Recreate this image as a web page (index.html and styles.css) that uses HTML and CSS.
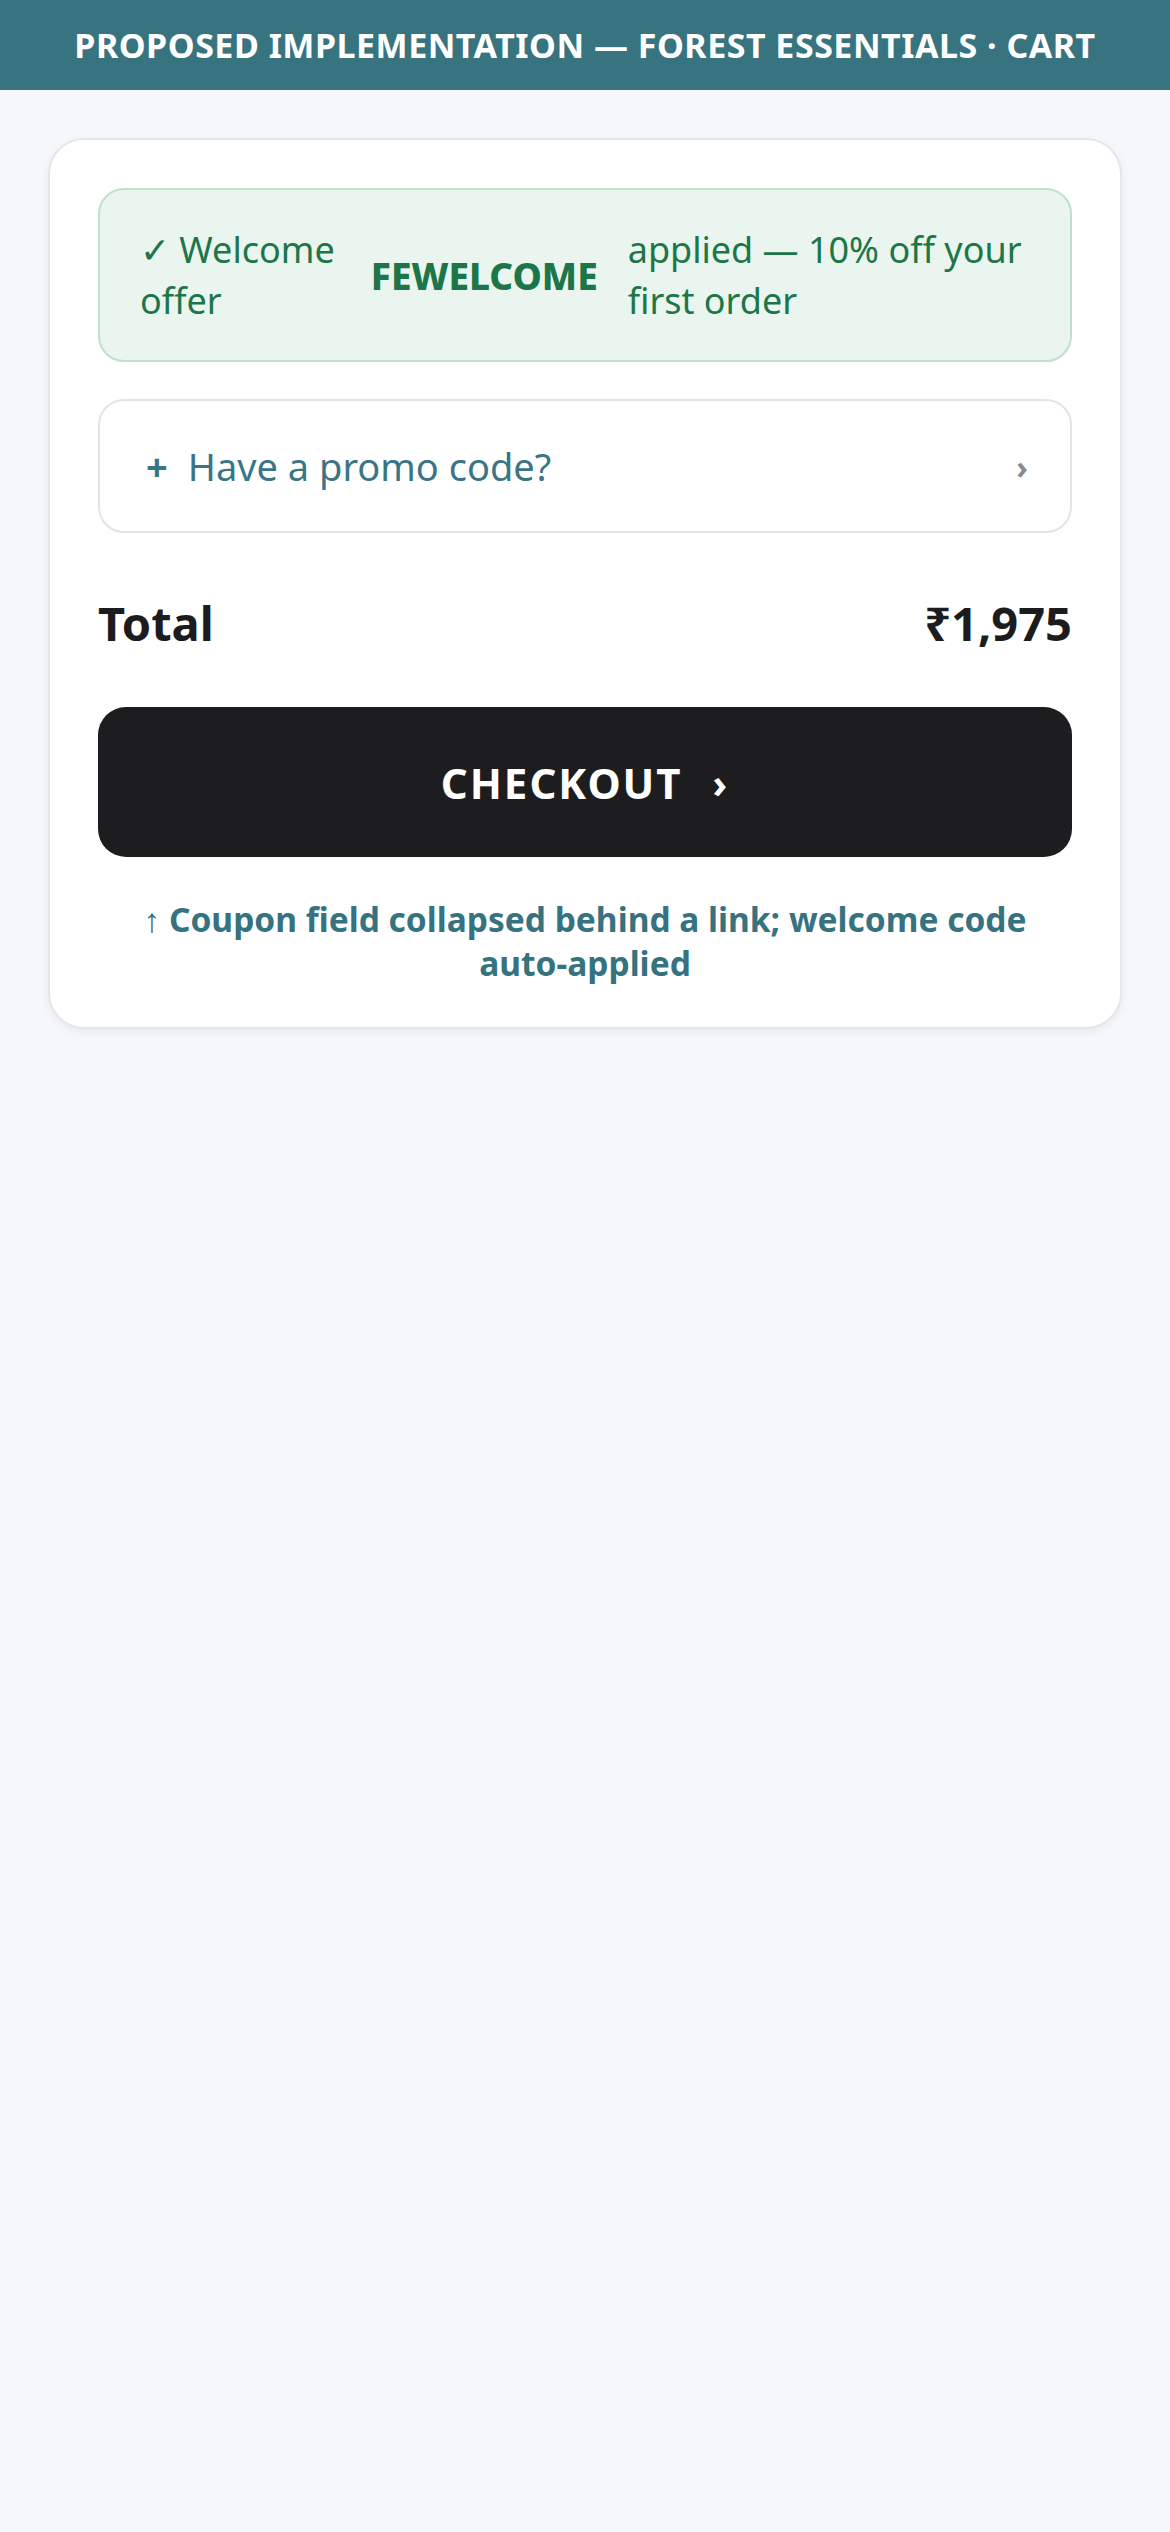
FILE: index.html
```html
<!doctype html>
<html lang="en">
  <head>
    <meta charset="UTF-8" />
    <meta name="viewport" content="width=device-width, initial-scale=1.0" />
    <title>Forest Essentials · Cart</title>
    <link rel="stylesheet" href="styles.css">
  </head>
  <body>
    <!-- Top label bar -->
    <header class="topbar">PROPOSED IMPLEMENTATION — FOREST ESSENTIALS · CART</header>

    <main class="cart-card">
      <div class="offer-applied">
        <span>✓ Welcome offer</span>
        <strong>FEWELCOME</strong>
        <span>applied — 10% off your first order</span>
      </div>

      <button class="promo-toggle">
        <span class="promo-plus">+</span>
        <span class="promo-label">Have a promo code?</span>
        <span class="promo-chevron">›</span>
      </button>

      <div class="total-row">
        <span>Total</span>
        <span>₹1,975</span>
      </div>

      <button class="checkout-btn">CHECKOUT <span class="checkout-arrow">›</span></button>

      <p class="note">↑ Coupon field collapsed behind a link; welcome code auto-applied</p>
    </main>
  </body>
</html>
```

FILE: styles.css
```css
body {
  margin: 0;
  font-family: "Noto Sans", "Open Sans", sans-serif;
  background-color: #f6f7f9;
  min-height: 2532px;
}

/* --- Top bar --- */
.topbar {
  height: 90px;
  display: flex;
  justify-content: center;
  align-items: center;
  background-color: #37747f;
  color: white;
  font-size: 34px;
  font-weight: 700;
  letter-spacing: 0.5px;
}

/* --- Card --- */
.cart-card {
  margin: 48px;
  padding: 48px 48px 42px;
  background-color: white;
  border: 2px solid #e4e6e9;
  border-radius: 36px;
  box-shadow: 0 3px 10px rgba(0, 0, 0, 0.06);
  display: flex;
  flex-direction: column;
}

.offer-applied {
  display: flex;
  align-items: center;
  gap: 30px;
  padding: 34px 40px;
  background-color: #e9f5ee;
  border: 2px solid #bfe1cc;
  border-radius: 26px;
  color: #1c7648;
  font-size: 36px;
  line-height: 51px;
}
.offer-applied strong {
  font-size: 37px;
  font-weight: 800;
}

.promo-toggle {
  margin-top: 37px;
  height: 134px;
  display: flex;
  align-items: center;
  gap: 20px;
  padding: 0 42px 0 46px;
  background-color: white;
  border: 2px solid #e2e4e7;
  border-radius: 26px;
  font-family: inherit;
  color: #3a7585;
  cursor: pointer;
}
.promo-plus {
  font-size: 38px;
  font-weight: 700;
}
.promo-label {
  flex: 1;
  text-align: left;
  font-size: 38px;
}
.promo-chevron {
  font-size: 32px;
  font-weight: 700;
  color: #8a8a8e;
}

.total-row {
  display: flex;
  justify-content: space-between;
  align-items: center;
  margin: 58px 0 52px;
  font-size: 47px;
  font-weight: 700;
  color: #1c1c1e;
}

.checkout-btn {
  height: 150px;
  display: flex;
  justify-content: center;
  align-items: center;
  gap: 30px;
  background-color: #1d1d1f;
  color: white;
  border: none;
  border-radius: 28px;
  font-family: inherit;
  font-size: 42px;
  font-weight: 700;
  letter-spacing: 2px;
  cursor: pointer;
}
.checkout-arrow {
  font-size: 40px;
}

.note {
  margin: 40px 0 0;
  text-align: center;
  color: #36727f;
  font-size: 33.5px;
  font-weight: 700;
  line-height: 44px;
}
```
